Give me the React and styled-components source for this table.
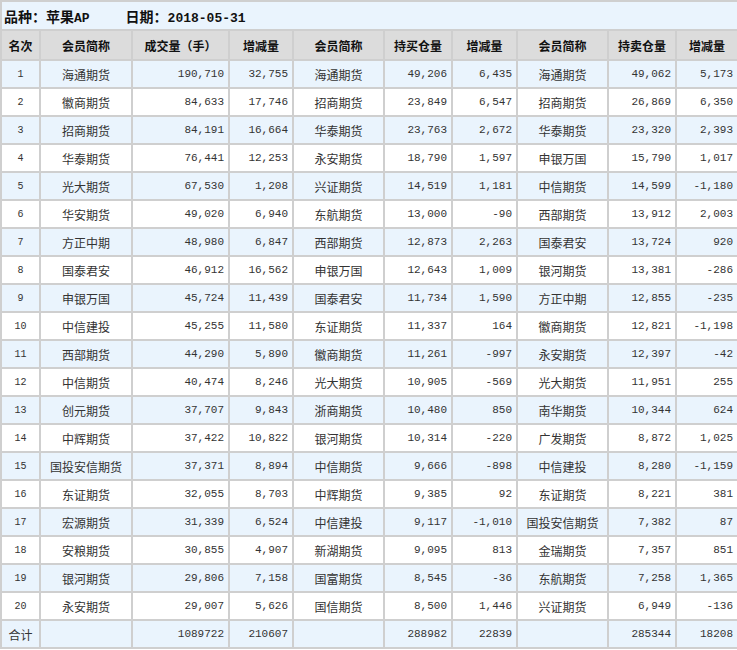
import styled, { createGlobalStyle } from "styled-components";

const GlobalStyle = createGlobalStyle`
  html, body {
    margin: 0;
    padding: 0;
    background: #ffffff;
  }
  body {
    font-family: "Noto Sans CJK SC", "Liberation Sans", sans-serif;
  }
`;

const rows = [
  ["海通期货", "190,710", "32,755", "海通期货", "49,206", "6,435", "海通期货", "49,062", "5,173"],
  ["徽商期货", "84,633", "17,746", "招商期货", "23,849", "6,547", "招商期货", "26,869", "6,350"],
  ["招商期货", "84,191", "16,664", "华泰期货", "23,763", "2,672", "华泰期货", "23,320", "2,393"],
  ["华泰期货", "76,441", "12,253", "永安期货", "18,790", "1,597", "申银万国", "15,790", "1,017"],
  ["光大期货", "67,530", "1,208", "兴证期货", "14,519", "1,181", "中信期货", "14,599", "-1,180"],
  ["华安期货", "49,020", "6,940", "东航期货", "13,000", "-90", "西部期货", "13,912", "2,003"],
  ["方正中期", "48,980", "6,847", "西部期货", "12,873", "2,263", "国泰君安", "13,724", "920"],
  ["国泰君安", "46,912", "16,562", "申银万国", "12,643", "1,009", "银河期货", "13,381", "-286"],
  ["申银万国", "45,724", "11,439", "国泰君安", "11,734", "1,590", "方正中期", "12,855", "-235"],
  ["中信建投", "45,255", "11,580", "东证期货", "11,337", "164", "徽商期货", "12,821", "-1,198"],
  ["西部期货", "44,290", "5,890", "徽商期货", "11,261", "-997", "永安期货", "12,397", "-42"],
  ["中信期货", "40,474", "8,246", "光大期货", "10,905", "-569", "光大期货", "11,951", "255"],
  ["创元期货", "37,707", "9,843", "浙商期货", "10,480", "850", "南华期货", "10,344", "624"],
  ["中辉期货", "37,422", "10,822", "银河期货", "10,314", "-220", "广发期货", "8,872", "1,025"],
  ["国投安信期货", "37,371", "8,894", "中信期货", "9,666", "-898", "中信建投", "8,280", "-1,159"],
  ["东证期货", "32,055", "8,703", "中辉期货", "9,385", "92", "东证期货", "8,221", "381"],
  ["宏源期货", "31,339", "6,524", "中信建投", "9,117", "-1,010", "国投安信期货", "7,382", "87"],
  ["安粮期货", "30,855", "4,907", "新湖期货", "9,095", "813", "金瑞期货", "7,357", "851"],
  ["银河期货", "29,806", "7,158", "国富期货", "8,545", "-36", "东航期货", "7,258", "1,365"],
  ["永安期货", "29,007", "5,626", "国信期货", "8,500", "1,446", "兴证期货", "6,949", "-136"],
];

const totals = ["", "1089722", "210607", "", "288982", "22839", "", "285344", "18208"];

const headers = ["名次", "会员简称", "成交量（手）", "增减量", "会员简称", "持买仓量", "增减量", "会员简称", "持卖仓量", "增减量"];
const widths = [39, 92, 97, 64, 91, 68, 65, 91, 68, 62];

const Page = styled.div`
  width: 737px;
  color: #333333;
`;

const Table = styled.table`
  width: 737px;
  table-layout: fixed;
  border-collapse: separate;
  border-spacing: 0;
  border: 1px solid #cfcfcf;
`;

const TitleCell = styled.td`
  height: 27px;
  padding: 0 0 0 2px;
  background: #eaf4fd;
  border: 1px solid #cfcfcf;
  font-size: 14px;
  font-weight: bold;
  color: #111111;
  white-space: nowrap;
`;

const DateLabel = styled.span`
  margin-left: 36px;
`;

const Mono = styled.span`
  font-family: "Liberation Mono", "DejaVu Sans Mono", monospace;
  font-size: 13px;
`;

const HeadCell = styled.th`
  height: 28px;
  padding: 0;
  background: #dcdcdc;
  border: 1px solid #cfcfcf;
  font-size: 12px;
  font-weight: bold;
  color: #111111;
  text-align: center;
`;

const Row = styled.tr`
  background: ${(p) => (p.$stripe ? "#eaf4fd" : "#ffffff")};
`;

const RankCell = styled.td`
  height: 26px;
  padding: 0;
  border: 1px solid #cfcfcf;
  text-align: center;
  font-family: ${(p) => (p.$cjk ? '"Noto Sans CJK SC", sans-serif' : '"Liberation Mono", monospace')};
  font-size: ${(p) => (p.$cjk ? "12px" : "10px")};
`;

const NameCell = styled.td`
  padding: 0;
  border: 1px solid #cfcfcf;
  text-align: center;
  font-size: 12px;
  white-space: nowrap;
`;

const NumCell = styled.td`
  padding: 0 4px 0 0;
  border: 1px solid #cfcfcf;
  text-align: right;
  font-family: "Liberation Mono", "DejaVu Sans Mono", monospace;
  font-size: 11px;
  white-space: nowrap;
`;

function Cell({ index, value }) {
  if (index % 3 === 0) return <NameCell>{value}</NameCell>;
  return <NumCell>{value}</NumCell>;
}

export default function App() {
  return (
    <>
      <GlobalStyle />
      <Page>
        <Table>
          <colgroup>
            {widths.map((w, i) => (
              <col key={i} style={{ width: w }} />
            ))}
          </colgroup>
          <tbody>
            <tr>
              <TitleCell colSpan={10}>
                品种：苹果<Mono>AP</Mono>
                <DateLabel>
                  日期：<Mono>2018-05-31</Mono>
                </DateLabel>
              </TitleCell>
            </tr>
            <tr>
              {headers.map((h, i) => (
                <HeadCell key={i}>{h}</HeadCell>
              ))}
            </tr>
            {rows.map((r, i) => (
              <Row key={i} $stripe={i % 2 === 0}>
                <RankCell>{i + 1}</RankCell>
                {r.map((v, j) => (
                  <Cell key={j} index={j} value={v} />
                ))}
              </Row>
            ))}
            <Row $stripe>
              <RankCell $cjk>合计</RankCell>
              {totals.map((v, j) => (
                <Cell key={j} index={j} value={v} />
              ))}
            </Row>
          </tbody>
        </Table>
      </Page>
    </>
  );
}
